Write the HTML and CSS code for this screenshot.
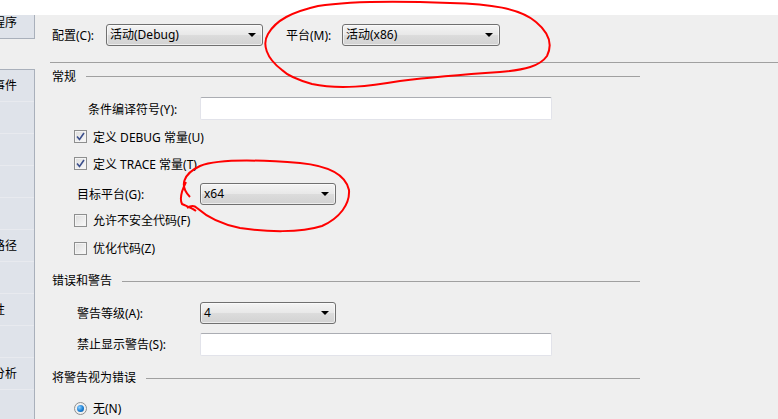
FILE: index.html
```html
<!DOCTYPE html>
<html lang="zh-CN">
<head>
    <meta charset="UTF-8">
    <meta name="viewport" content="width=device-width, initial-scale=1.0">
    <title>生成</title>
    <link rel="stylesheet" href="styles.css">
</head>
<body>
    <div class="window">
        <div class="top-strip"></div>
        <div class="main">
            <div class="sidebar">
                <div class="side-inner">
                    <div class="side-tab"><span class="side-label">应用程序</span></div>
                    <div class="side-tab selected"><span class="side-label">生成</span></div>
                    <div class="side-list">
                        <div class="side-item"><span class="side-label">生成事件</span></div>
                        <div class="side-item"><span class="side-label">调试</span></div>
                        <div class="side-item"><span class="side-label">资源</span></div>
                        <div class="side-item"><span class="side-label">服务</span></div>
                        <div class="side-item"><span class="side-label">设置</span></div>
                        <div class="side-item"><span class="side-label">引用路径</span></div>
                        <div class="side-item"><span class="side-label">签名</span></div>
                        <div class="side-item"><span class="side-label">安全性</span></div>
                        <div class="side-item"><span class="side-label">发布</span></div>
                        <div class="side-item"><span class="side-label">代码分析</span></div>
                    </div>
                </div>
            </div>

            <div class="content">
                <div class="toolbar">
                    <span class="tool-label">配置(C):</span>
                    <div class="combo combo-config">活动(Debug)<span class="arrow"></span></div>
                    <span class="tool-label platform-label">平台(M):</span>
                    <div class="combo combo-platform">活动(x86)<span class="arrow"></span></div>
                </div>
                <div class="top-rule"></div>

                <!-- 常规 -->
                <div class="section-head head-general"><span>常规</span><div class="rule"></div></div>
                <div class="field first-field">
                    <span class="field-label label-narrow">条件编译符号(Y):</span>
                    <div class="textbox"></div>
                </div>
                <div class="check-row gap-6">
                    <span class="checkbox checked"><svg width="9" height="9" viewBox="0 0 9 9"><path d="M1 4.5 L3.5 7.5 L8 1" fill="none" stroke="#3b4f8c" stroke-width="1.6"/></svg></span>
                    <span>定义 DEBUG 常量(U)</span>
                </div>
                <div class="check-row gap-5">
                    <span class="checkbox checked"><svg width="9" height="9" viewBox="0 0 9 9"><path d="M1 4.5 L3.5 7.5 L8 1" fill="none" stroke="#3b4f8c" stroke-width="1.6"/></svg></span>
                    <span>定义 TRACE 常量(T)</span>
                </div>
                <div class="field gap-8">
                    <span class="field-label">目标平台(G):</span>
                    <div class="combo combo-small">x64<span class="arrow"></span></div>
                </div>
                <div class="check-row gap-5">
                    <span class="checkbox"></span>
                    <span>允许不安全代码(F)</span>
                </div>
                <div class="check-row gap-6">
                    <span class="checkbox"></span>
                    <span>优化代码(Z)</span>
                </div>

                <!-- 错误和警告 -->
                <div class="section-head head-errors"><span>错误和警告</span><div class="rule"></div></div>
                <div class="field gap-14">
                    <span class="field-label">警告等级(A):</span>
                    <div class="combo combo-small">4<span class="arrow"></span></div>
                </div>
                <div class="field gap-9">
                    <span class="field-label">禁止显示警告(S):</span>
                    <div class="textbox"></div>
                </div>

                <!-- 将警告视为错误 -->
                <div class="section-head head-treat"><span>将警告视为错误</span><div class="rule"></div></div>
                <div class="check-row gap-12">
                    <span class="radio"><span class="radio-dot"></span></span>
                    <span>无(N)</span>
                </div>
            </div>
        </div>

        <svg class="marks" width="778" height="419" viewBox="0 0 778 419">
            <path d="M282 70 C266 58 262 44 268 34 C276 20 292 12 318 6 C350 1 400 1 450 3 C490 4 520 8 536 22 C548 32 553 44 547 56 C540 66 525 70 500 72 C470 74 440 76 400 81 C370 86 340 90 312 84 C298 80 288 76 282 70"
                  fill="none" stroke="#f00" stroke-width="2"/>
            <path d="M190 197 C179 186 183 174 200 166 C220 158 262 160 300 163 C330 166 346 176 349 190 C350 204 340 218 322 226 C300 233 266 232 240 228 C220 224 206 216 197 208 C194 205 190 206 187 208 M186 182 C181 192 180 200 182 204 C186 206 192 208 196 211"
                  fill="none" stroke="#f00" stroke-width="2"/>
        </svg>
    </div>
</body>
</html>
```

FILE: styles.css
```css
body {
    margin: 0;
    background-color: #efefef;
    font-family: "Noto Sans", "Noto Sans CJK SC", sans-serif;
    font-size: 12px;
    color: #000;
}
.window {
    position: relative;
    width: 778px;
    height: 419px;
    overflow: hidden;
    background-color: #efefef;
}
.top-strip {
    height: 15px;
    background-color: #fff;
}
.main {
    display: flex;
    height: 404px;
}

/* left tab list, scrolled so only the end of the long names shows */
.sidebar {
    width: 35px;
    flex-shrink: 0;
    overflow: hidden;
}
.side-inner {
    margin-top: -8px;
}
.side-tab {
    height: 31px;
    display: flex;
    align-items: center;
    background-color: #dfe3ea;
    border-right: 1px solid #a9b0bb;
    border-bottom: 1px solid #a9b0bb;
}
.side-tab.selected {
    height: 30px;
    background-color: #efefef;
    border: none;
}
.side-list {
    background-color: #dfe3ea;
    border-top: 1px solid #a9b0bb;
    border-right: 1px solid #a9b0bb;
    height: 400px;
}
.side-item {
    height: 31px;
    display: flex;
    align-items: center;
    border-bottom: 1px solid #e8eaef;
}
.side-label {
    margin-left: -31px;
    white-space: nowrap;
    line-height: 14px;
}

/* right side */
.content {
    flex: 1;
    display: flex;
    flex-direction: column;
}
.toolbar {
    display: flex;
    align-items: center;
    height: 22px;
    margin: 9px 0 0 17px;
}
.tool-label {
    width: 54px;
}
.platform-label {
    width: 56px;
    margin-left: 23px;
}
.top-rule {
    height: 1px;
    background-color: #a0a0a0;
    margin: 16px 0 0 15px;
}

.combo {
    position: relative;
    box-sizing: border-box;
    height: 22px;
    line-height: 20px;
    padding-left: 3px;
    border: 1px solid #707070;
    border-radius: 3px;
    background: linear-gradient(#f4f4f4, #e8e8e8 50%, #dcdcdc 51%, #d2d2d2);
    box-shadow: inset 0 0 0 1px rgba(255,255,255,0.6);
}
.combo-config {
    width: 157px;
}
.combo-platform {
    width: 158px;
}
.combo-small {
    width: 136px;
}
.arrow {
    position: absolute;
    right: 6px;
    top: 8px;
    width: 0;
    height: 0;
    border-left: 4px solid transparent;
    border-right: 4px solid transparent;
    border-top: 4px solid #000;
}

.section-head {
    display: flex;
    align-items: center;
    width: 588px;
    height: 14px;
    margin-left: 17px;
    line-height: 14px;
}
.section-head .rule {
    flex: 1;
    height: 1px;
    margin-left: 10px;
    background-color: #a0a0a0;
}
.head-general {
    margin-top: 7px;
}
.head-errors {
    margin-top: 15px;
}
.head-treat {
    margin-top: 16px;
}

.field {
    display: flex;
    align-items: center;
    height: 22px;
    padding-left: 42px;
}
.first-field {
    margin-top: 14px;
}
.field-label {
    box-sizing: border-box;
    width: 123px;
}
.label-narrow {
    padding-left: 11px;
}
.textbox {
    box-sizing: border-box;
    width: 352px;
    height: 23px;
    background-color: #fff;
    border: 1px solid #e2e3ea;
    border-top-color: #abadb3;
    border-radius: 2px;
}

.check-row {
    display: flex;
    align-items: center;
    height: 22px;
    padding-left: 39px;
}
.checkbox {
    box-sizing: border-box;
    width: 13px;
    height: 13px;
    margin-right: 6px;
    border: 1px solid #8e8f8f;
    background: linear-gradient(135deg, #dcdcdc, #fafafa);
    box-shadow: inset 0 0 0 1px #f4f4f4;
    display: flex;
    align-items: center;
    justify-content: center;
}
.radio {
    box-sizing: border-box;
    width: 13px;
    height: 13px;
    margin-right: 6px;
    border: 1px solid #8e8f8f;
    border-radius: 50%;
    background: #f0f0f0;
    display: flex;
    align-items: center;
    justify-content: center;
}
.radio-dot {
    width: 7px;
    height: 7px;
    border-radius: 50%;
    background: radial-gradient(circle at 35% 35%, #8ed0ff, #1a7fd4 55%, #0b4f96);
}

.gap-5 { margin-top: 5px; }
.gap-6 { margin-top: 6px; }
.gap-8 { margin-top: 8px; }
.gap-9 { margin-top: 9px; }
.gap-12 { margin-top: 12px; }
.gap-14 { margin-top: 14px; }

.marks {
    position: absolute;
    left: 0;
    top: 0;
    pointer-events: none;
}
```
